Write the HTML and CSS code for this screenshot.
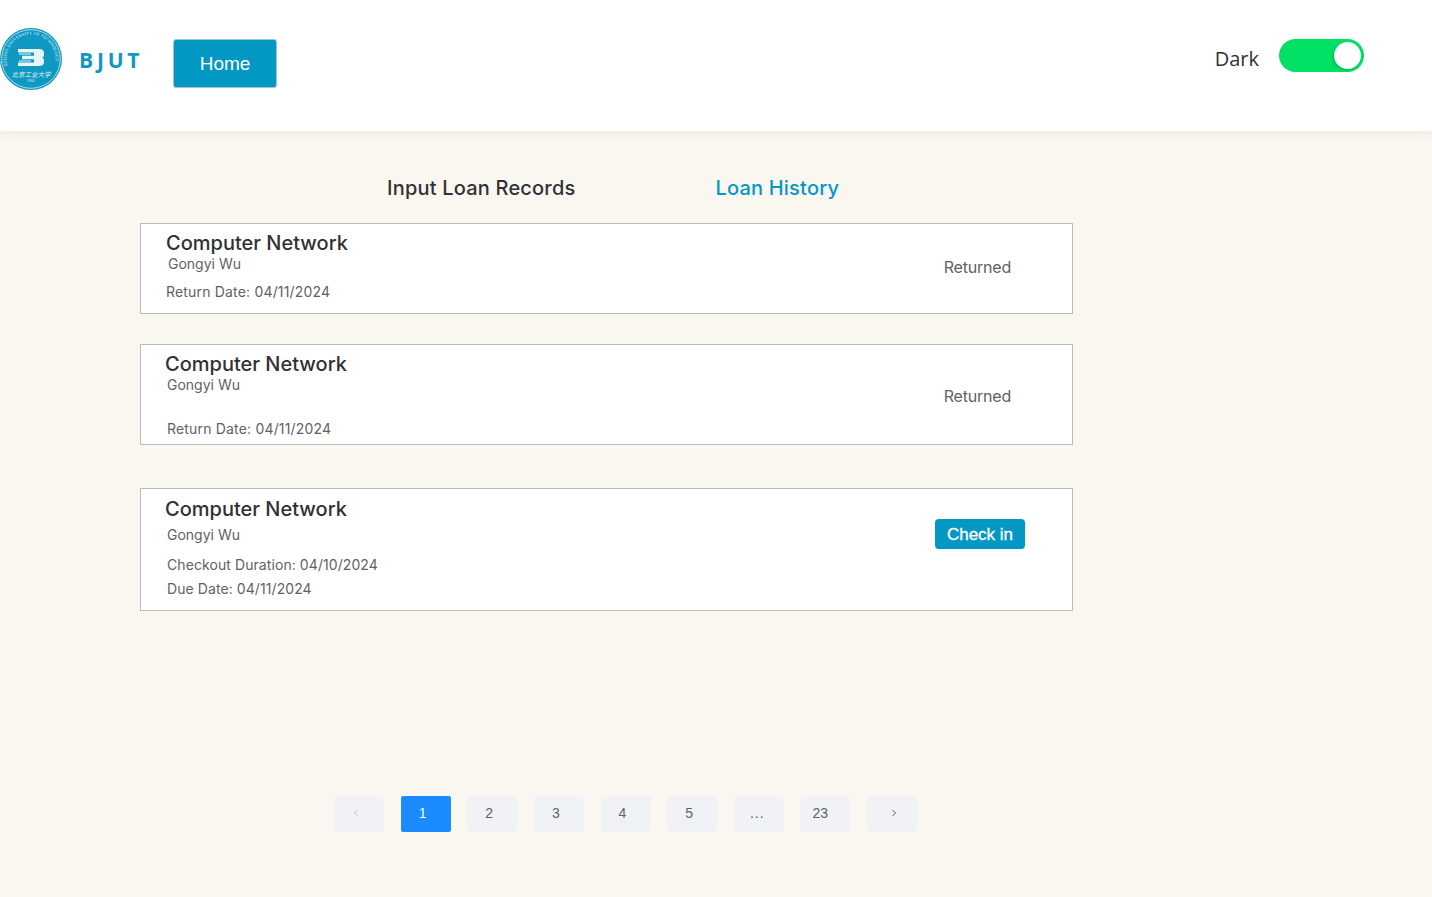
FILE: index.html
```html
<!DOCTYPE html>
<html>
<head>
    <title>BJUT Library</title>
    <link rel="stylesheet" href="styles.css">
</head>
<body>
<header class="topbar">
    <div class="brand">
        <svg class="logo" viewBox="0 0 62 62" width="62" height="62">
            <defs>
                <path id="ring" d="M7.500 38 A24.500 24.500 0 1 1 54.500 38"/>
            </defs>
            <circle cx="31" cy="31" r="31" fill="#0f98c1"/>
            <circle cx="31" cy="31" r="29.300" fill="none" stroke="#bfe3ee" stroke-width="0.900"/>
            <text class="logo-ring"><textPath href="#ring">BEIJING UNIVERSITY OF TECHNOLOGY</textPath></text>
            <path d="M18 21H39Q44 21 44 25V27Q44 29 42 29.500Q44 30 44 32V34Q44 38 39 38H18V34.500H34V31.300H22V27.700H34V24.500H18Z" fill="#e8f5f9"/>
            <path d="M19 26H31M19 33H31" stroke="#e8f5f9" stroke-width="1.200"/>
            <text class="logo-cn" x="31" y="48.500" text-anchor="middle">北京工业大学</text>
            <text class="logo-year" x="31" y="54" text-anchor="middle">1960</text>
        </svg>
        <span class="brand-name">BJUT</span>
    </div>
    <a class="home-btn">Home</a>
    <div class="theme">
        <span class="theme-label">Dark</span>
        <span class="toggle"><span class="knob"></span></span>
    </div>
</header>

<main class="content">
    <nav class="tabs">
        <span class="tab">Input Loan Records</span>
        <span class="tab active">Loan History</span>
    </nav>

    <section class="card card-one">
        <div class="info">
            <h3>Computer Network</h3>
            <p class="author">Gongyi Wu</p>
            <p class="date">Return Date: 04/11/2024</p>
        </div>
        <span class="status">Returned</span>
    </section>

    <section class="card card-two">
        <div class="info">
            <h3>Computer Network</h3>
            <p class="author">Gongyi Wu</p>
            <p class="date">Return Date: 04/11/2024</p>
        </div>
        <span class="status">Returned</span>
    </section>

    <section class="card card-three">
        <div class="info">
            <h3>Computer Network</h3>
            <p class="author">Gongyi Wu</p>
            <p class="date">Checkout Duration: 04/10/2024</p>
            <p class="date">Due Date: 04/11/2024</p>
        </div>
        <a class="checkin">Check in</a>
    </section>

    <div class="pager">
        <span class="page prev">
            <svg viewBox="0 0 8 10" width="8" height="10"><path d="M5.500 2 L2.500 5 L5.500 8" fill="none" stroke="#c4c6cc" stroke-width="1"/></svg>
        </span>
        <span class="page current">1</span>
        <span class="page">2</span>
        <span class="page">3</span>
        <span class="page">4</span>
        <span class="page">5</span>
        <span class="page dots">...</span>
        <span class="page wide">23</span>
        <span class="page next">
            <svg viewBox="0 0 8 10" width="8" height="10"><path d="M2.500 2 L5.500 5 L2.500 8" fill="none" stroke="#606266" stroke-width="1"/></svg>
        </span>
    </div>
</main>
</body>
</html>
```
FILE: styles.css
```css
* {
    box-sizing: border-box;
}

html, body {
    margin: 0;
    height: 100%;
}

body {
    background-color: #faf7f1;
    font-family: Inter, "Liberation Sans", sans-serif;
    color: #303133;
    overflow: hidden;
}

.topbar {
    height: 131px;
    background-color: #fff;
    box-shadow: 0 2px 10px rgba(0, 0, 0, 0.06);
    display: flex;
    align-items: flex-start;
    position: relative;
}

.brand {
    display: flex;
    align-items: center;
    margin-top: 28px;
    width: 173px;
}

.logo {
    display: block;
}

.logo-ring {
    font-family: "Liberation Serif", serif;
    font-size: 4.300px;
    letter-spacing: 0.200px;
    fill: #e4f4f9;
}

.logo-cn {
    font-family: "Noto Sans CJK SC", sans-serif;
    font-size: 6.500px;
    font-style: italic;
    fill: #e8f5f9;
}

.logo-year {
    font-family: "Liberation Sans", sans-serif;
    font-size: 3.500px;
    fill: #d8eff6;
}

.brand-name {
    margin-left: 17px;
    margin-top: 2px;
    font-family: "Open Sans", sans-serif;
    font-weight: 700;
    font-size: 21px;
    letter-spacing: 3.800px;
    color: #0f98c1;
}

.home-btn {
    margin-top: 39px;
    width: 104px;
    height: 49px;
    background-color: #0398c3;
    border: 1px solid #9cc7d4;
    border-radius: 3px;
    color: #fff;
    font-family: "Liberation Sans", sans-serif;
    font-size: 19px;
    display: flex;
    align-items: center;
    justify-content: center;
}

.theme {
    margin-left: auto;
    margin-right: 68px;
    margin-top: 39px;
    display: flex;
    align-items: flex-start;
}

.theme-label {
    font-family: "Open Sans", sans-serif;
    font-size: 20px;
    line-height: 27px;
    margin-top: 6px;
    margin-right: 20px;
    color: #303133;
}

.toggle {
    width: 85px;
    height: 33px;
    border-radius: 17px;
    background-color: #00e064;
    display: flex;
    align-items: center;
    justify-content: flex-end;
    padding-right: 3px;
}

.knob {
    width: 27px;
    height: 27px;
    border-radius: 50%;
    background-color: #fff;
    box-shadow: -1px 1px 3px rgba(0, 0, 0, 0.2);
}

.content {
    width: 1073px;
    padding-left: 140px;
}

.tabs {
    display: flex;
    height: 92px;
    padding-top: 44px;
    padding-left: 247px;
    gap: 140px;
}

.tab {
    font-size: 20px;
    line-height: 27px;
    font-weight: 500;
    letter-spacing: 0.200px;
    color: #303133;
}

.tab.active {
    color: #0398c3;
}

.card {
    background-color: #fff;
    border: 1px solid #bbb;
    display: flex;
    justify-content: space-between;
}

.card h3 {
    margin: 0;
    font-size: 20px;
    line-height: 24px;
    font-weight: 500;
    color: #303133;
}

.card p {
    margin: 0;
    font-size: 14px;
    line-height: 24px;
    color: #606266;
}

.card .date {
    letter-spacing: 0.180px;
}

.card-one {
    height: 91px;
    margin-bottom: 30px;
    padding: 7px 61px 0 25px;
}

.card-one .author {
    margin: -3px 0 4px 2px;
}

.card-two {
    height: 101px;
    margin-bottom: 43px;
    padding: 7px 61px 0 24px;
}

.card-two .author,
.card-two .date {
    margin-left: 2px;
}

.card-two .author {
    margin-top: -3px;
    margin-bottom: 20px;
}

.card-three {
    height: 123px;
    margin-bottom: 185px;
    padding: 8px 47px 0 24px;
}

.card-three .author,
.card-three .date {
    margin-left: 2px;
}

.card-three .author {
    margin-top: 2px;
    margin-bottom: 6px;
}

.card-three .date {
    letter-spacing: 0.080px;
}

.status {
    font-size: 16px;
    line-height: 22px;
    color: #606266;
    letter-spacing: -0.200px;
}

.card-one .status {
    margin-top: 25px;
}

.card-two .status {
    margin-top: 33px;
}

.checkin {
    margin-top: 22px;
    width: 90px;
    height: 30px;
    padding-top: 2px;
    background-color: #0398c3;
    border-radius: 4px;
    color: #fff;
    font-family: "Liberation Sans", sans-serif;
    font-size: 17px;
    -webkit-text-stroke: 0.300px #fff;
    display: flex;
    align-items: center;
    justify-content: center;
}

.pager {
    display: flex;
    gap: 16.630px;
    margin-left: 194px;
}

.page {
    width: 50px;
    height: 36px;
    padding-right: 6px;
    padding-bottom: 2px;
    background-color: #f0f2f5;
    border-radius: 2px;
    font-family: "Liberation Sans", sans-serif;
    font-size: 14px;
    color: #606266;
    display: flex;
    align-items: center;
    justify-content: center;
}

.page.current {
    background-color: #1a8cff;
    color: #fff;
}

.page.prev {
    padding-bottom: 3px;
}

.page.next {
    padding-right: 0;
    padding-left: 3px;
}

.page.wide {
    padding-right: 10px;
}

.page.dots {
    padding-right: 3px;
    letter-spacing: 1px;
}
```
